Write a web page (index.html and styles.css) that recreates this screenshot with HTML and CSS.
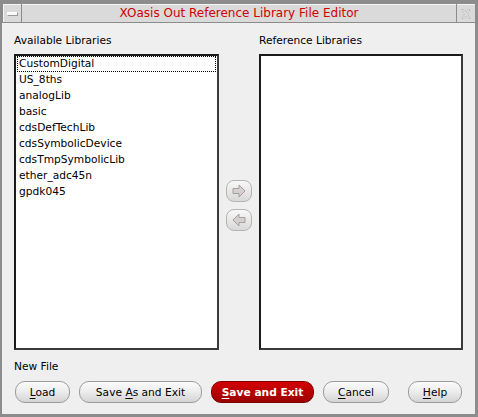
FILE: index.html
```html
<!DOCTYPE html>
<html>
<head>
<meta charset="utf-8">
<link rel="stylesheet" href="styles.css">
</head>
<body>
<div class="window">
  <div class="titlebar">
    <div class="tb-btn tb-min"><span class="min-bar"></span></div>
    <div class="tb-title">XOasis Out Reference Library File Editor</div>
    <div class="tb-btn tb-close">
      <svg width="12" height="12" viewBox="0 0 12 12">
        <path d="M1.5 1.5 L4 1.5 L6 4 L8 1.5 L10.5 1.5 L7.5 6 L10.5 10.5 L8 10.5 L6 8 L4 10.5 L1.5 10.5 L4.5 6 Z" fill="none" stroke="#b8b8b8" stroke-width="1" stroke-dasharray="1 1"/>
      </svg>
    </div>
  </div>
  <div class="content">
    <div class="columns">
      <div class="col">
        <div class="label">Available Libraries</div>
        <div class="listbox">
          <div class="item focus">CustomDigital</div>
          <div class="item">US_8ths</div>
          <div class="item">analogLib</div>
          <div class="item">basic</div>
          <div class="item">cdsDefTechLib</div>
          <div class="item">cdsSymbolicDevice</div>
          <div class="item">cdsTmpSymbolicLib</div>
          <div class="item">ether_adc45n</div>
          <div class="item">gpdk045</div>
        </div>
      </div>
      <div class="middle">
        <div class="arrow-btn">
          <svg width="16" height="14" viewBox="0 0 16 14">
            <path d="M2 4.5 L8 4.5 L8 1 L14 7 L8 13 L8 9.5 L2 9.5 Z" fill="#d4d0d0" stroke="#a89c9c" stroke-width="1"/>
          </svg>
        </div>
        <div class="arrow-btn">
          <svg width="16" height="14" viewBox="0 0 16 14">
            <path d="M14 4.5 L8 4.5 L8 1 L2 7 L8 13 L8 9.5 L14 9.5 Z" fill="#d4d0d0" stroke="#a89c9c" stroke-width="1"/>
          </svg>
        </div>
      </div>
      <div class="col col-right">
        <div class="label">Reference Libraries</div>
        <div class="listbox"></div>
      </div>
    </div>
    <div class="newfile">New File</div>
    <div class="buttons">
      <button class="btn b-load"><u>L</u>oad</button>
      <button class="btn b-saveas">Save <u>A</u>s and Exit</button>
      <button class="btn primary b-save"><u>S</u>ave and Exit</button>
      <button class="btn b-cancel"><u>C</u>ancel</button>
      <button class="btn b-help"><u>H</u>elp</button>
    </div>
  </div>
</div>
</body>
</html>
```
FILE: styles.css
```css
html, body {
  margin: 0;
  padding: 0;
  background: #efefef;
}
.window {
  width: 478px;
  height: 417px;
  box-sizing: border-box;
  border-left: 2px solid #8c8c8c;
  border-top: 3px solid #8c8c8c;
  border-right: 3px solid #8c8c8c;
  border-bottom: 3px solid #8c8c8c;
  background: #efefef;
  font-family: "DejaVu Sans", sans-serif;
  font-size: 10.65px;
  color: #000;
  display: flex;
  flex-direction: column;
}
.titlebar {
  height: 18px;
  display: flex;
  background: #8c8c8c;
  padding: 1px 0 0 1px;
  gap: 1px;
  border-bottom: 1px solid #8c8c8c;
}
.tb-btn {
  width: 17px;
  background: #dadada;
  display: flex;
  align-items: center;
  justify-content: center;
}
.tb-min {
  border-left: 1px solid #f4f4f4;
  border-top: 1px solid #f4f4f4;
}
.min-bar {
  width: 9px;
  height: 2px;
  background: #f8f8f8;
  border: 1px solid #9a9a9a;
  border-top-color: #fff;
  border-left-color: #fff;
}
.tb-title {
  flex: 1;
  background: #dadada;
  color: #d00000;
  font-size: 12px;
  text-align: center;
  line-height: 17px;
  border-top: 1px solid #f4f4f4;
}
.tb-close {
  width: 18px;
  border-top: 1px solid #f4f4f4;
}
.content {
  flex: 1;
  padding: 11px 12px 0 12px;
  display: flex;
  flex-direction: column;
}
.columns {
  display: flex;
}
.col {
  width: 205px;
  display: flex;
  flex-direction: column;
}
.col-right {
  width: 204px;
}
.label {
  line-height: 13px;
  height: 13px;
  margin-bottom: 7px;
}
.listbox {
  height: 296px;
  box-sizing: border-box;
  background: #fff;
  border-top: 2px solid #1a1a1a;
  border-left: 2px solid #1a1a1a;
  border-right: 2px solid #3a3a3a;
  border-bottom: 2px solid #3a3a3a;
  padding: 0 1px;
}
.item {
  line-height: 16px;
  height: 16px;
  padding-left: 2px;
  white-space: nowrap;
}
.item.focus {
  outline: 1px dotted #000;
  outline-offset: -1px;
}
.middle {
  width: 40px;
  display: flex;
  flex-direction: column;
  align-items: center;
  padding-top: 146px;
  gap: 7px;
  box-sizing: border-box;
}
.arrow-btn {
  width: 26px;
  height: 22px;
  flex: none;
  box-sizing: border-box;
  border: 1px solid #b4b4b4;
  border-radius: 8px;
  background: linear-gradient(#f8f8f8, #d8d8d8);
  display: flex;
  align-items: center;
  justify-content: center;
}
.newfile {
  margin-top: 10px;
  line-height: 13px;
  height: 13px;
}
.buttons {
  margin-top: 8px;
  display: flex;
  padding-left: 1px;
}
.btn {
  height: 22px;
  box-sizing: border-box;
  border: 1px solid #9c9c9c;
  border-radius: 10px;
  background: linear-gradient(#fbfbfb 0%, #eeeeee 45%, #d4d4d4 100%);
  font-family: "DejaVu Sans", sans-serif;
  font-size: 10.65px;
  color: #000;
  padding: 0;
  margin: 0;
}
.btn u {
  text-underline-offset: 2px;
}
.b-load { width: 55px; }
.b-saveas { width: 123px; margin-left: 9px; }
.b-save { width: 103px; margin-left: 9px; }
.b-cancel { width: 66px; margin-left: 9px; }
.b-help { width: 54px; margin-left: 19px; }
.btn.primary {
  background: linear-gradient(#d40000 0%, #b80000 50%, #9c0000 100%);
  border-color: #7a0000;
  color: #fff;
  font-weight: bold;
}
```
